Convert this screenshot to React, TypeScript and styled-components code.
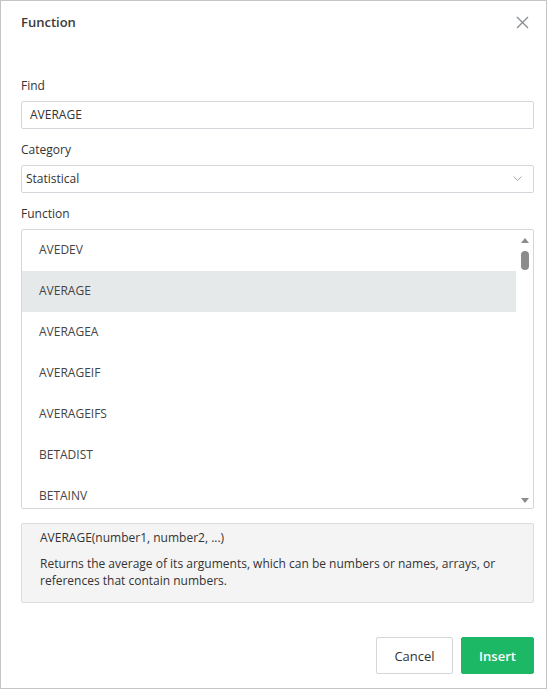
import styled, { createGlobalStyle } from 'styled-components';

const GlobalStyle = createGlobalStyle`
  * {
    box-sizing: border-box;
  }

  html,
  body {
    margin: 0;
    padding: 0;
    background: #fff;
  }

  body {
    font-family: 'Open Sans', 'Noto Sans', sans-serif;
    font-size: 12px;
    color: #333;
  }
`;

const functions = [
  'AVEDEV',
  'AVERAGE',
  'AVERAGEA',
  'AVERAGEIF',
  'AVERAGEIFS',
  'BETADIST',
  'BETAINV',
];

const App = () => {
  const selected = 'AVERAGE';

  return (
    <>
      <GlobalStyle />
      <Dialog>
        <Header>
          <Title>Function</Title>
          <CloseButton aria-label="Close">
            <svg width="13" height="13" viewBox="0 0 13 13">
              <path
                d="M1 1 L12 12 M12 1 L1 12"
                stroke="#8a8f94"
                strokeWidth="1.4"
                fill="none"
              />
            </svg>
          </CloseButton>
        </Header>

        <Body>
          <Field>
            <Label>Find</Label>
            <Input defaultValue="AVERAGE" />
          </Field>

          <Field>
            <Label>Category</Label>
            <Select>
              <span>Statistical</span>
              <svg width="9" height="5" viewBox="0 0 9 5">
                <path
                  d="M0.5 0.5 L4.5 4.5 L8.5 0.5"
                  stroke="#a8acb0"
                  strokeWidth="1"
                  fill="none"
                />
              </svg>
            </Select>
          </Field>

          <Field>
            <Label>Function</Label>
            <List>
              <Items>
                {functions.map(name => (
                  <Item key={name} active={name === selected}>
                    {name}
                  </Item>
                ))}
              </Items>
              <Scrollbar>
                <Arrow />
                <Thumb />
                <Track />
                <Arrow down />
              </Scrollbar>
            </List>
          </Field>

          <Description>
            <Syntax>AVERAGE(number1, number2, ...)</Syntax>
            <Text>
              Returns the average of its arguments, which can be numbers or
              names, arrays, or references that contain numbers.
            </Text>
          </Description>
        </Body>

        <Footer>
          <Button width={77}>Cancel</Button>
          <Button width={73} primary>
            Insert
          </Button>
        </Footer>
      </Dialog>
    </>
  );
};

export default App;

const Dialog = styled.div`
  display: flex;
  flex-direction: column;
  width: 547px;
  height: 689px;
  border: 1px solid #c4c4c4;
  background: #fff;
`;

const Header = styled.div`
  display: flex;
  align-items: center;
  justify-content: space-between;
  height: 42px;
  padding: 0 17px 0 20px;
`;

const Title = styled.h2`
  margin: 0;
  font-size: 13px;
  font-weight: 600;
  color: #3a3a3a;
`;

const CloseButton = styled.button`
  display: flex;
  align-items: center;
  justify-content: center;
  padding: 0;
  border: 0;
  background: transparent;
  cursor: pointer;
`;

const Body = styled.div`
  display: flex;
  flex-direction: column;
  gap: 13px;
  padding: 35px 12px 0 20px;
`;

const Field = styled.div`
  display: flex;
  flex-direction: column;
  gap: 7px;
`;

const Label = styled.label`
  line-height: 16px;
  color: #333;
`;

const Input = styled.input`
  height: 28px;
  padding: 0 8px 2px;
  border: 1px solid #d3d7db;
  border-radius: 2px;
  font-family: inherit;
  font-size: 12px;
  color: #333;
  outline: none;
`;

const Select = styled.div`
  display: flex;
  align-items: center;
  justify-content: space-between;
  height: 28px;
  padding: 0 11px 1px 4px;
  border: 1px solid #d3d7db;
  border-radius: 2px;
  color: #333;
`;

const List = styled.div`
  display: flex;
  height: 280px;
  border: 1px solid #d3d7db;
  border-radius: 2px;
  overflow: hidden;
`;

const Items = styled.ul`
  flex: 1;
  margin: 0;
  padding: 0;
  list-style: none;
`;

const Item = styled.li<{ active?: boolean }>`
  display: flex;
  align-items: center;
  height: 41px;
  padding: 0 0 3px 17px;
  color: #444;
  background: ${props => (props.active ? '#e5e9ea' : 'transparent')};
`;

const Scrollbar = styled.div`
  display: flex;
  flex-direction: column;
  align-items: center;
  width: 17px;
  padding: 8px 0 5px;
`;

const Arrow = styled.div<{ down?: boolean }>`
  width: 0;
  height: 0;
  border-left: 4.5px solid transparent;
  border-right: 4.5px solid transparent;
  ${props =>
    props.down
      ? 'border-top: 5px solid #8c8c8c;'
      : 'border-bottom: 5px solid #8c8c8c;'}
`;

const Thumb = styled.div`
  width: 8px;
  height: 19px;
  margin-top: 8px;
  border-radius: 4px;
  background: #8c8c8c;
`;

const Track = styled.div`
  flex: 1;
`;

const Description = styled.div`
  display: flex;
  flex-direction: column;
  gap: 9px;
  height: 80px;
  margin-top: 1px;
  padding: 5px 18px 0;
  border: 1px solid #dcdcdc;
  border-radius: 2px;
  background: #f4f4f4;
  color: #333;
`;

const Syntax = styled.div`
  line-height: 17px;
`;

const Text = styled.div`
  line-height: 17px;
`;

const Footer = styled.div`
  display: flex;
  justify-content: flex-end;
  gap: 8px;
  margin-top: auto;
  padding: 0 12px 14px 0;
`;

const Button = styled.button<{ primary?: boolean; width: number }>`
  width: ${props => props.width}px;
  height: 37px;
  padding: 0;
  border: 1px solid ${props => (props.primary ? '#1db865' : '#d3d7db')};
  border-radius: 2px;
  background: ${props => (props.primary ? '#1db865' : '#fff')};
  font-family: inherit;
  font-size: 13px;
  font-weight: ${props => (props.primary ? 600 : 400)};
  color: ${props => (props.primary ? '#fff' : '#333')};
  cursor: pointer;
`;
